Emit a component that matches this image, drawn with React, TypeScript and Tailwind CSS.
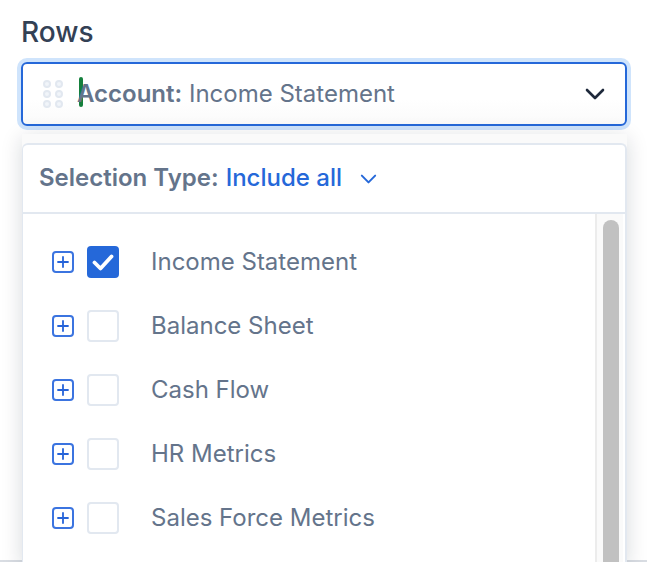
import React from "react";

const rows = ["Income Statement", "Balance Sheet", "Cash Flow", "HR Metrics", "Sales Force Metrics"];

function Chevron({ className }: { className: string }) {
  return (
    <svg viewBox="0 0 20 12" fill="none" stroke="currentColor" strokeLinecap="round" strokeLinejoin="round" className={className}>
      <path d="M2 2l8 8 8-8" />
    </svg>
  );
}

function Row({ label, checked }: { label: string; checked: boolean }) {
  return (
    <div className="flex h-[64px] shrink-0 items-center pl-[29px]">
      <div className="flex h-[22px] w-[22px] items-center justify-center rounded-[4px] border-2 border-[#3b74e0] bg-white">
        <svg viewBox="0 0 12 12" className="h-[12px] w-[12px]" fill="none" stroke="#2563d9" strokeWidth="1.8" strokeLinecap="round">
          <path d="M6 1v10M1 6h10" />
        </svg>
      </div>
      {checked ? (
        <div className="ml-[13px] flex h-[32px] w-[32px] items-center justify-center rounded-[4px] bg-[#2568d9]">
          <svg viewBox="0 0 22 18" className="h-[18px] w-[22px]" fill="none" stroke="white" strokeWidth="3.8" strokeLinecap="round" strokeLinejoin="round">
            <path d="M2.5 9.5l6 6 11-12" />
          </svg>
        </div>
      ) : (
        <div className="ml-[13px] h-[32px] w-[32px] rounded-[4px] border-2 border-[#e2e8f0] bg-white" />
      )}
      <span className="ml-[32px] text-[24px] leading-[32px] text-[#64748b]">{label}</span>
    </div>
  );
}

export default function App() {
  return (
    <div className="relative h-[562px] w-[647px] overflow-hidden bg-white font-['Inter',sans-serif]">
      <div className="flex h-[560px] flex-col pl-[21px] pt-[16px]">
        <div className="text-[28px] font-medium leading-[32px] text-[#334155]">Rows</div>
        <div className="mt-[14px] flex h-[64px] w-[606px] shrink-0 items-center rounded-[6px] border-2 border-[#2568d9] bg-gradient-to-b from-white from-60% to-[#fafafa] px-[20px] shadow-[0_0_0_4px_#cfe4fc]">
          <svg viewBox="0 0 20 28" className="h-[28px] w-[20px] shrink-0" fill="#f1f5f9" stroke="#e2e8f0" strokeWidth="2">
            <circle cx="4" cy="4" r="3" />
            <circle cx="16" cy="4" r="3" />
            <circle cx="4" cy="14" r="3" />
            <circle cx="16" cy="14" r="3" />
            <circle cx="4" cy="24" r="3" />
            <circle cx="16" cy="24" r="3" />
          </svg>
          <div className="relative ml-[14px] flex-1 whitespace-nowrap text-[24px] leading-[32px] text-[#64748b]">
            <span className="absolute left-[2px] top-[-1px] h-[30px] w-[4px] rounded-[2px] bg-[#15803d]" />
            <span className="relative font-semibold">Account:</span> Income Statement
          </div>
          <Chevron className="h-[12px] w-[20px] stroke-[2.6] text-[#1e293b]" />
        </div>
      </div>
      <div className="absolute bottom-0 left-0 right-0 h-[2px] bg-[#d9dde3]" />
      <div className="absolute left-[22px] top-[134px] h-[430px] w-[605px] bg-[#fafafa] pt-[9px] shadow-[0_4px_20px_rgba(15,23,42,0.16)]">
        <div className="flex h-full flex-col rounded-t-[6px] border-l border-r-2 border-t-2 border-[#e2e8f0] bg-white">
          <div className="flex h-[69px] shrink-0 items-center border-b-2 border-[#e2e8f0] pb-[2px] pl-[16px]">
            <span className="text-[24px] font-semibold text-[#64748b]">Selection Type:</span>
            <span className="ml-[7px] text-[24px] font-medium text-[#2568d9]">Include all</span>
            <Chevron className="ml-[18px] mt-[2px] h-[10px] w-[17px] stroke-[2.4] text-[#2568d9]" />
          </div>
          <div className="flex min-h-0 flex-1">
            <div className="flex-1 pt-[16px]">
              {rows.map((r, i) => (
                <Row key={r} label={r} checked={i === 0} />
              ))}
            </div>
            <div className="mr-[2px] w-[28px] shrink-0 border-l-2 border-[#ececec] bg-[#fafafa] pl-[6px] pt-[6px]">
              <div className="h-full w-[16px] rounded-t-[8px] bg-[#c1c1c1]" />
            </div>
          </div>
        </div>
      </div>
    </div>
  );
}
